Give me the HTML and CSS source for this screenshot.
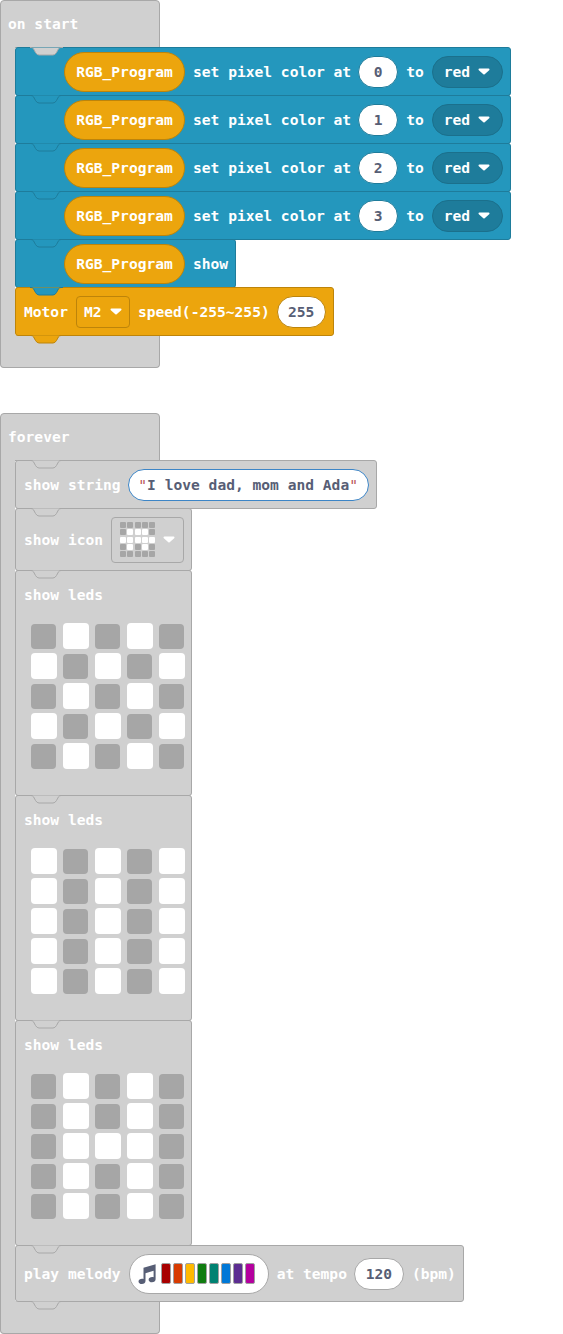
FILE: index.html
```html
<!DOCTYPE html>
<html lang="en">
<head>
<meta charset="utf-8">
<title>Blocks</title>
<link rel="stylesheet" href="styles.css">
</head>
<body>
<main class="workspace">

<section class="hat">
  <div class="cap">on start</div>
  <div class="hat-body">
    <div class="rail"></div>
    <div class="stack">
      <div class="block blue">
        <svg class="notch n-gray" viewBox="0 0 33 10"><path d="M0 .5H1Q2.500 .5 3.500 1.800L5.500 5.500Q7 8 9 8H23Q25 8 26.500 5.500L28.500 1.800Q29.500 .5 31 .5H33"/></svg>
        <span class="pill">RGB_Program</span><span>set pixel color at</span><span class="num w40 on-blue">0</span><span>to</span>
        <span class="drop">red<svg class="caret" viewBox="0 0 12 7"><path d="M1.500 1.500H10.500L6 5.500Z"/></svg></span>
      </div>
      <div class="block blue">
        <svg class="notch n-blue" viewBox="0 0 33 10"><path d="M0 .5H1Q2.500 .5 3.500 1.800L5.500 5.500Q7 8 9 8H23Q25 8 26.500 5.500L28.500 1.800Q29.500 .5 31 .5H33"/></svg>
        <span class="pill">RGB_Program</span><span>set pixel color at</span><span class="num w40 on-blue">1</span><span>to</span>
        <span class="drop">red<svg class="caret" viewBox="0 0 12 7"><path d="M1.500 1.500H10.500L6 5.500Z"/></svg></span>
      </div>
      <div class="block blue">
        <svg class="notch n-blue" viewBox="0 0 33 10"><path d="M0 .5H1Q2.500 .5 3.500 1.800L5.500 5.500Q7 8 9 8H23Q25 8 26.500 5.500L28.500 1.800Q29.500 .5 31 .5H33"/></svg>
        <span class="pill">RGB_Program</span><span>set pixel color at</span><span class="num w40 on-blue">2</span><span>to</span>
        <span class="drop">red<svg class="caret" viewBox="0 0 12 7"><path d="M1.500 1.500H10.500L6 5.500Z"/></svg></span>
      </div>
      <div class="block blue">
        <svg class="notch n-blue" viewBox="0 0 33 10"><path d="M0 .5H1Q2.500 .5 3.500 1.800L5.500 5.500Q7 8 9 8H23Q25 8 26.500 5.500L28.500 1.800Q29.500 .5 31 .5H33"/></svg>
        <span class="pill">RGB_Program</span><span>set pixel color at</span><span class="num w40 on-blue">3</span><span>to</span>
        <span class="drop">red<svg class="caret" viewBox="0 0 12 7"><path d="M1.500 1.500H10.500L6 5.500Z"/></svg></span>
      </div>
      <div class="block blue">
        <svg class="notch n-blue" viewBox="0 0 33 10"><path d="M0 .5H1Q2.500 .5 3.500 1.800L5.500 5.500Q7 8 9 8H23Q25 8 26.500 5.500L28.500 1.800Q29.500 .5 31 .5H33"/></svg>
        <span class="pill">RGB_Program</span><span>show</span>
      </div>
      <div class="block orange motor">
        <svg class="notch n-blue" viewBox="0 0 33 10"><path d="M0 .5H1Q2.500 .5 3.500 1.800L5.500 5.500Q7 8 9 8H23Q25 8 26.500 5.500L28.500 1.800Q29.500 .5 31 .5H33"/></svg>
        <span>Motor</span>
        <span class="motor-drop">M2<svg class="caret" viewBox="0 0 12 7"><path d="M1.500 1.500H10.500L6 5.500Z"/></svg></span>
        <span>speed(-255~255)</span>
        <span class="num w48 on-orange">255</span>
        <svg class="notch tab n-orange" viewBox="0 0 33 10"><path d="M0 .5H1Q2.500 .5 3.500 1.800L5.500 5.500Q7 8 9 8H23Q25 8 26.500 5.500L28.500 1.800Q29.500 .5 31 .5H33"/></svg>
      </div>
    </div>
  </div>
  <div class="foot"></div>
</section>

<section class="hat">
  <div class="cap">forever</div>
  <div class="hat-body">
    <div class="rail"></div>
    <div class="stack">
      <div class="block gray">
        <svg class="notch n-gray" viewBox="0 0 33 10"><path d="M0 .5H1Q2.500 .5 3.500 1.800L5.500 5.500Q7 8 9 8H23Q25 8 26.500 5.500L28.500 1.800Q29.500 .5 31 .5H33"/></svg>
        <span>show string</span>
        <span class="string"><span class="quote">"</span><span>I love dad, mom and Ada</span><span class="quote">"</span></span>
      </div>
      <div class="block gray icon-block">
        <svg class="notch n-gray" viewBox="0 0 33 10"><path d="M0 .5H1Q2.500 .5 3.500 1.800L5.500 5.500Q7 8 9 8H23Q25 8 26.500 5.500L28.500 1.800Q29.500 .5 31 .5H33"/></svg>
        <span>show icon</span>
        <span class="icon-field">
          <span class="mini">
            <i></i><i></i><i></i><i></i><i></i>
            <i></i><i class="w"></i><i class="w"></i><i class="w"></i><i></i>
            <i class="w"></i><i class="w"></i><i class="w"></i><i class="w"></i><i class="w"></i>
            <i></i><i class="w"></i><i></i><i class="w"></i><i></i>
            <i></i><i></i><i></i><i></i><i></i>
          </span>
          <svg class="caret" viewBox="0 0 12 7"><path d="M1.500 1.500H10.500L6 5.500Z"/></svg>
        </span>
      </div>
      <div class="block gray leds">
        <svg class="notch n-gray" viewBox="0 0 33 10"><path d="M0 .5H1Q2.500 .5 3.500 1.800L5.500 5.500Q7 8 9 8H23Q25 8 26.500 5.500L28.500 1.800Q29.500 .5 31 .5H33"/></svg>
        <span>show leds</span>
        <div class="grid">
          <i></i><i class="w"></i><i></i><i class="w"></i><i></i>
          <i class="w"></i><i></i><i class="w"></i><i></i><i class="w"></i>
          <i></i><i class="w"></i><i></i><i class="w"></i><i></i>
          <i class="w"></i><i></i><i class="w"></i><i></i><i class="w"></i>
          <i></i><i class="w"></i><i></i><i class="w"></i><i></i>
        </div>
      </div>
      <div class="block gray leds">
        <svg class="notch n-gray" viewBox="0 0 33 10"><path d="M0 .5H1Q2.500 .5 3.500 1.800L5.500 5.500Q7 8 9 8H23Q25 8 26.500 5.500L28.500 1.800Q29.500 .5 31 .5H33"/></svg>
        <span>show leds</span>
        <div class="grid">
          <i class="w"></i><i></i><i class="w"></i><i></i><i class="w"></i>
          <i class="w"></i><i></i><i class="w"></i><i></i><i class="w"></i>
          <i class="w"></i><i></i><i class="w"></i><i></i><i class="w"></i>
          <i class="w"></i><i></i><i class="w"></i><i></i><i class="w"></i>
          <i class="w"></i><i></i><i class="w"></i><i></i><i class="w"></i>
        </div>
      </div>
      <div class="block gray leds">
        <svg class="notch n-gray" viewBox="0 0 33 10"><path d="M0 .5H1Q2.500 .5 3.500 1.800L5.500 5.500Q7 8 9 8H23Q25 8 26.500 5.500L28.500 1.800Q29.500 .5 31 .5H33"/></svg>
        <span>show leds</span>
        <div class="grid">
          <i></i><i class="w"></i><i></i><i class="w"></i><i></i>
          <i></i><i class="w"></i><i></i><i class="w"></i><i></i>
          <i></i><i class="w"></i><i class="w"></i><i class="w"></i><i></i>
          <i></i><i class="w"></i><i></i><i class="w"></i><i></i>
          <i></i><i class="w"></i><i></i><i class="w"></i><i></i>
        </div>
      </div>
      <div class="block gray melody">
        <svg class="notch n-gray" viewBox="0 0 33 10"><path d="M0 .5H1Q2.500 .5 3.500 1.800L5.500 5.500Q7 8 9 8H23Q25 8 26.500 5.500L28.500 1.800Q29.500 .5 31 .5H33"/></svg>
        <span>play melody</span>
        <span class="melody-field">
          <svg class="note" viewBox="0 0 18 20"><path d="M5.500 3.800 17.600 .3V15.200C17.600 17 16 18.300 14 18.300 12 18.300 10.600 17.200 10.600 15.700 10.600 14.100 12.300 13 14.200 13 14.800 13 15.300 13.100 15.600 13.200V6.800L7.500 9.200V17C7.500 18.800 5.900 20 3.900 20 1.900 20 .5 18.900 .5 17.400 .5 15.800 2.200 14.700 4 14.700 4.600 14.700 5.100 14.800 5.500 15Z"/></svg>
          <span class="swatches">
            <i class="c1"></i><i class="c2"></i><i class="c3"></i><i class="c4"></i><i class="c5"></i><i class="c6"></i><i class="c7"></i><i class="c8"></i>
          </span>
        </span>
        <span>at tempo</span>
        <span class="num w50 on-gray">120</span>
        <span>(bpm)</span>
        <svg class="notch tab n-gray" viewBox="0 0 33 10"><path d="M0 .5H1Q2.500 .5 3.500 1.800L5.500 5.500Q7 8 9 8H23Q25 8 26.500 5.500L28.500 1.800Q29.500 .5 31 .5H33"/></svg>
      </div>
    </div>
  </div>
  <div class="foot"></div>
</section>

</main>
</body>
</html>
```
FILE: styles.css
```css
* { box-sizing: border-box; }

html, body { margin: 0; background: #fff; }

body {
  font-family: "DejaVu Sans Mono", "Liberation Mono", monospace;
  font-size: 14.6px;
  font-weight: 700;
  line-height: 18px;
  color: #fff;
}

.workspace {
  display: flex;
  flex-direction: column;
  gap: 45px;
  width: 563px;
}

.hat {
  display: flex;
  flex-direction: column;
}

.cap {
  width: 160px;
  height: 48px;
  padding: 14px 7px;
  background: #d0d0d0;
  border: 1px solid #a8a8a8;
  border-radius: 4px 4px 0 0;
}

.hat-body {
  display: flex;
  margin-top: -1px;
}

.rail {
  width: 15px;
  background: #d0d0d0;
  border-left: 1px solid #a8a8a8;
}

.stack {
  display: flex;
  flex-direction: column;
  align-items: flex-start;
}

.foot {
  width: 160px;
  height: 33px;
  background: #d0d0d0;
  border: 1px solid #a8a8a8;
  border-top: 0;
  border-radius: 0 0 4px 4px;
}

.block {
  position: relative;
  display: flex;
  align-items: center;
  gap: 8px;
  height: 49px;
  margin-bottom: -1px;
  padding: 0 7px 0 8px;
  border: 1px solid;
  border-radius: 3px;
  white-space: pre;
}

.blue {
  padding-left: 48px;
  background: #2497bd;
  border-color: #1e7c9b;
}

.orange {
  background: #eca50d;
  border-color: #bd840a;
}

.gray {
  background: #d0d0d0;
  border-color: #a8a8a8;
}

.notch {
  position: absolute;
  left: 14px;
  top: -1px;
  width: 33px;
  height: 10px;
  overflow: visible;
}

.notch path { stroke-width: 1; }

.tab { top: auto; bottom: -10px; }

.n-gray path { fill: #d0d0d0; stroke: #a8a8a8; }
.n-blue path { fill: #2497bd; stroke: #1e7c9b; }
.n-orange path { fill: #eca50d; stroke: #bd840a; }

.pill {
  display: flex;
  align-items: center;
  justify-content: center;
  width: 121px;
  height: 40px;
  background: #eca50d;
  border: 1px solid #bd840a;
  border-radius: 20px;
}

.num {
  display: flex;
  align-items: center;
  justify-content: center;
  height: 32px;
  margin-left: -1px;
  background: #fff;
  border: 1px solid;
  border-radius: 16px;
  color: #575e75;
}

.w40 { width: 40px; }
.w48 { width: 49px; }
.w50 { width: 50px; }

.on-blue { border-color: #1e7c9b; }
.on-orange { border-color: #bd840a; }
.on-gray { border-color: #a8a8a8; }

.drop {
  display: flex;
  align-items: center;
  gap: 8px;
  width: 71px;
  height: 32px;
  padding-left: 11px;
  background: #1e7c9b;
  border: 1px solid #1b708c;
  border-radius: 16px;
}

.caret {
  width: 12px;
  height: 7px;
  flex: none;
}

.caret path {
  fill: #fff;
  stroke: #fff;
  stroke-width: 2;
  stroke-linejoin: round;
}

.motor-drop {
  display: flex;
  align-items: center;
  gap: 8px;
  width: 54px;
  height: 32px;
  padding-left: 7px;
  border: 1px solid #bd840a;
  border-radius: 4px;
}

.string {
  display: flex;
  align-items: center;
  justify-content: center;
  width: 241px;
  height: 32px;
  margin-left: -1px;
  background: #fff;
  border: 1px solid #3d85c6;
  border-radius: 16px;
  color: #575e75;
}

.quote {
  color: #a31515;
  font-weight: 400;
  opacity: .75;
}

.icon-block { height: 63px; }

.icon-field {
  display: flex;
  align-items: center;
  gap: 8px;
  width: 73px;
  height: 46px;
  padding-left: 8px;
  border: 1px solid #a8a8a8;
  border-radius: 4px;
}

.mini {
  display: grid;
  grid-template-columns: repeat(5, 6px);
  grid-auto-rows: 6px;
  gap: 1.25px;
}

.mini i {
  background: #a6a6a6;
  border-radius: 1px;
}

.mini i.w { background: #fff; }

.leds {
  flex-direction: column;
  align-items: flex-start;
  gap: 0;
  width: 177px;
  height: 226px;
  padding-top: 15px;
}

.grid {
  display: grid;
  grid-template-columns: repeat(5, 32px);
  grid-template-rows: repeat(5, 30px);
  place-items: center;
  margin: 17px 0 0 3.5px;
}

.grid i {
  width: 25px;
  height: 25px;
  background: #a6a6a6;
  border-radius: 4px;
}

.grid i.w {
  width: 26px;
  height: 26px;
  background: #fff;
}

.melody { height: 57px; }

.melody-field {
  display: flex;
  align-items: center;
  gap: 5px;
  width: 140px;
  height: 40px;
  padding-left: 8px;
  background: #fff;
  border: 1px solid #a8a8a8;
  border-radius: 20px;
}

.note {
  width: 18px;
  height: 20px;
  flex: none;
}

.note path { fill: #575e75; }

.swatches {
  display: flex;
  gap: 2px;
}

.swatches i {
  width: 10px;
  height: 21px;
  border: 1px solid #a0a0a0;
  border-radius: 2px;
}

.c1 { background: #a80000; }
.c2 { background: #d83b01; }
.c3 { background: #ffb900; }
.c4 { background: #107c10; }
.c5 { background: #008272; }
.c6 { background: #0078d7; }
.c7 { background: #5c2d91; }
.c8 { background: #b4009e; }
```
